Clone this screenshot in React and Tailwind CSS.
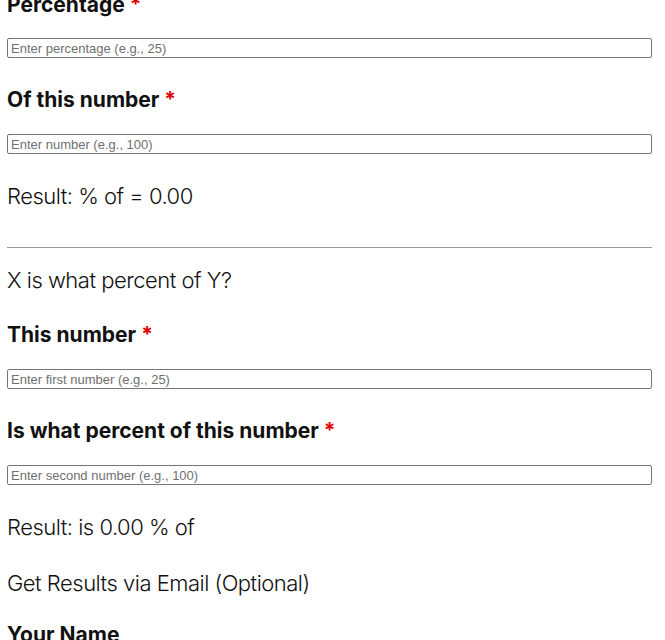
import { useState } from 'react'

const FONT = { fontFamily: 'Inter, "Noto Sans", sans-serif' }

function Field({ label, placeholder, className = '' }) {
  const [value, setValue] = useState('')
  return (
    <div className={className}>
      <label className="block text-[21px] font-bold leading-[28px] text-[#111]">
        {label} <span className="text-[#e00000]">*</span>
      </label>
      <input
        type="text"
        value={value}
        onChange={(e) => setValue(e.target.value)}
        placeholder={placeholder}
        className="mt-[20px] block h-[20px] w-full rounded-[2px] border border-[#767676] bg-white px-[3px] text-[13px] leading-[18px] text-[#111] placeholder:text-[#6f6f6f] outline-none"
        style={{ fontFamily: '"Liberation Sans", Arial, sans-serif' }}
      />
    </div>
  )
}

export default function App() {
  return (
    <div className="min-h-screen bg-white px-[7px] pr-[13px] overflow-hidden" style={FONT}>
      <div className="-mt-[9px]">
        {/* Percentage of a number */}
        <Field label="Percentage" placeholder="Enter percentage (e.g., 25)" className="[&>input]:mt-[19px]" />
        <Field label="Of this number" placeholder="Enter number (e.g., 100)" className="mt-[28px]" />
        <p className="mt-[27px] text-[22px] font-light leading-[30px] tracking-[-0.5px] text-[#111]">
          Result: % of = 0.00
        </p>

        <hr className="mt-[36px] border-0 border-t border-[#9a9a9a]" />

        {/* X is what percent of Y */}
        <p className="mt-[17px] text-[22px] font-light leading-[30px] tracking-[-0.5px] text-[#111]">
          X is what percent of Y?
        </p>
        <Field label="This number" placeholder="Enter first number (e.g., 25)" className="mt-[26px]" />
        <Field label="Is what percent of this number" placeholder="Enter second number (e.g., 100)" className="mt-[28px]" />
        <p className="mt-[27px] text-[22px] font-light leading-[30px] tracking-[-0.5px] text-[#111]">
          Result: is 0.00 % of
        </p>

        <p className="mt-[26px] text-[22px] font-light leading-[30px] tracking-[-0.5px] text-[#111]">
          Get Results via Email (Optional)
        </p>
        <label className="mt-[23px] block text-[21px] font-bold leading-[28px] text-[#111]">
          Your Name
        </label>
      </div>
    </div>
  )
}
